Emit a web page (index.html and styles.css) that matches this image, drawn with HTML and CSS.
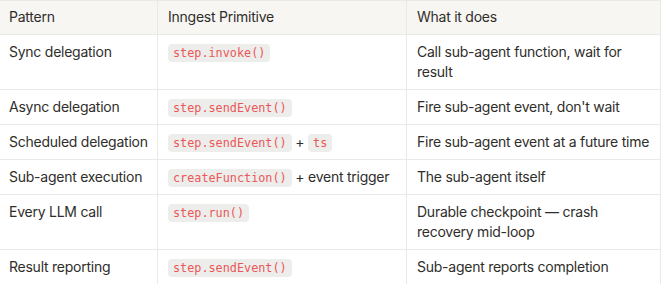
FILE: index.html
```html
<!DOCTYPE html>
<html lang="en">
<head>
  <meta charset="UTF-8">
  <title>Delegation patterns</title>
  <link rel="stylesheet" href="styles.css">
</head>
<body>

  <table class="tabela">
    <tr>
      <th class="col-padrao">Pattern</th>
      <th class="col-primitiva">Inngest Primitive</th>
      <th class="col-descricao">What it does</th>
    </tr>
    <tr>
      <td>Sync delegation</td>
      <td><code>step.invoke()</code></td>
      <td>Call sub-agent function, wait for result</td>
    </tr>
    <tr>
      <td>Async delegation</td>
      <td><code>step.sendEvent()</code></td>
      <td>Fire sub-agent event, don't wait</td>
    </tr>
    <tr>
      <td>Scheduled delegation</td>
      <td><code>step.sendEvent()</code> + <code>ts</code></td>
      <td>Fire sub-agent event at a future time</td>
    </tr>
    <tr>
      <td>Sub-agent execution</td>
      <td><code>createFunction()</code> + event trigger</td>
      <td>The sub-agent itself</td>
    </tr>
    <tr>
      <td>Every LLM call</td>
      <td><code>step.run()</code></td>
      <td>Durable checkpoint — crash recovery mid-loop</td>
    </tr>
    <tr>
      <td>Result reporting</td>
      <td><code>step.sendEvent()</code></td>
      <td>Sub-agent reports completion</td>
    </tr>
  </table>

</body>
</html>
```

FILE: styles.css
```css
:root {
  --texto: #2f2e2a;
  --borda: #e9e9e7;
  --fundo-cabecalho: #f7f6f3;
  --codigo-texto: #eb5757;
  --codigo-fundo: rgba(135, 131, 120, 0.15);
}

body {
  font-family: Inter, 'Noto Sans', sans-serif;
  color: var(--texto);
  background-color: #ffffff;
  margin: 0;
  overflow: hidden;
}

.tabela {
  border-collapse: collapse;
  margin-left: -1px;
  table-layout: fixed;
  width: 662px;
}

.col-padrao {
  width: 139px;
}

.col-primitiva {
  width: 229px;
}

.tabela th,
.tabela td {
  border: 1px solid var(--borda);
  text-align: left;
  vertical-align: top;
  font-size: 14px;
  letter-spacing: -0.25px;
  line-height: 20px;
  padding: 7px 9px 7px 9px;
}

.tabela th {
  padding-top: 6px;
}

.tabela td:nth-child(2),
.tabela th:nth-child(2),
.tabela td:nth-child(3),
.tabela th:nth-child(3) {
  padding-left: 10px;
}

.tabela th {
  background-color: var(--fundo-cabecalho);
  font-weight: 400;
}

code {
  font-family: 'DejaVu Sans Mono', 'Liberation Mono', monospace;
  font-size: 11.8px;
  line-height: 1;
  letter-spacing: 0;
  color: var(--codigo-texto);
  background-color: var(--codigo-fundo);
  border-radius: 4px;
  padding: 2px 5px;
}
```
